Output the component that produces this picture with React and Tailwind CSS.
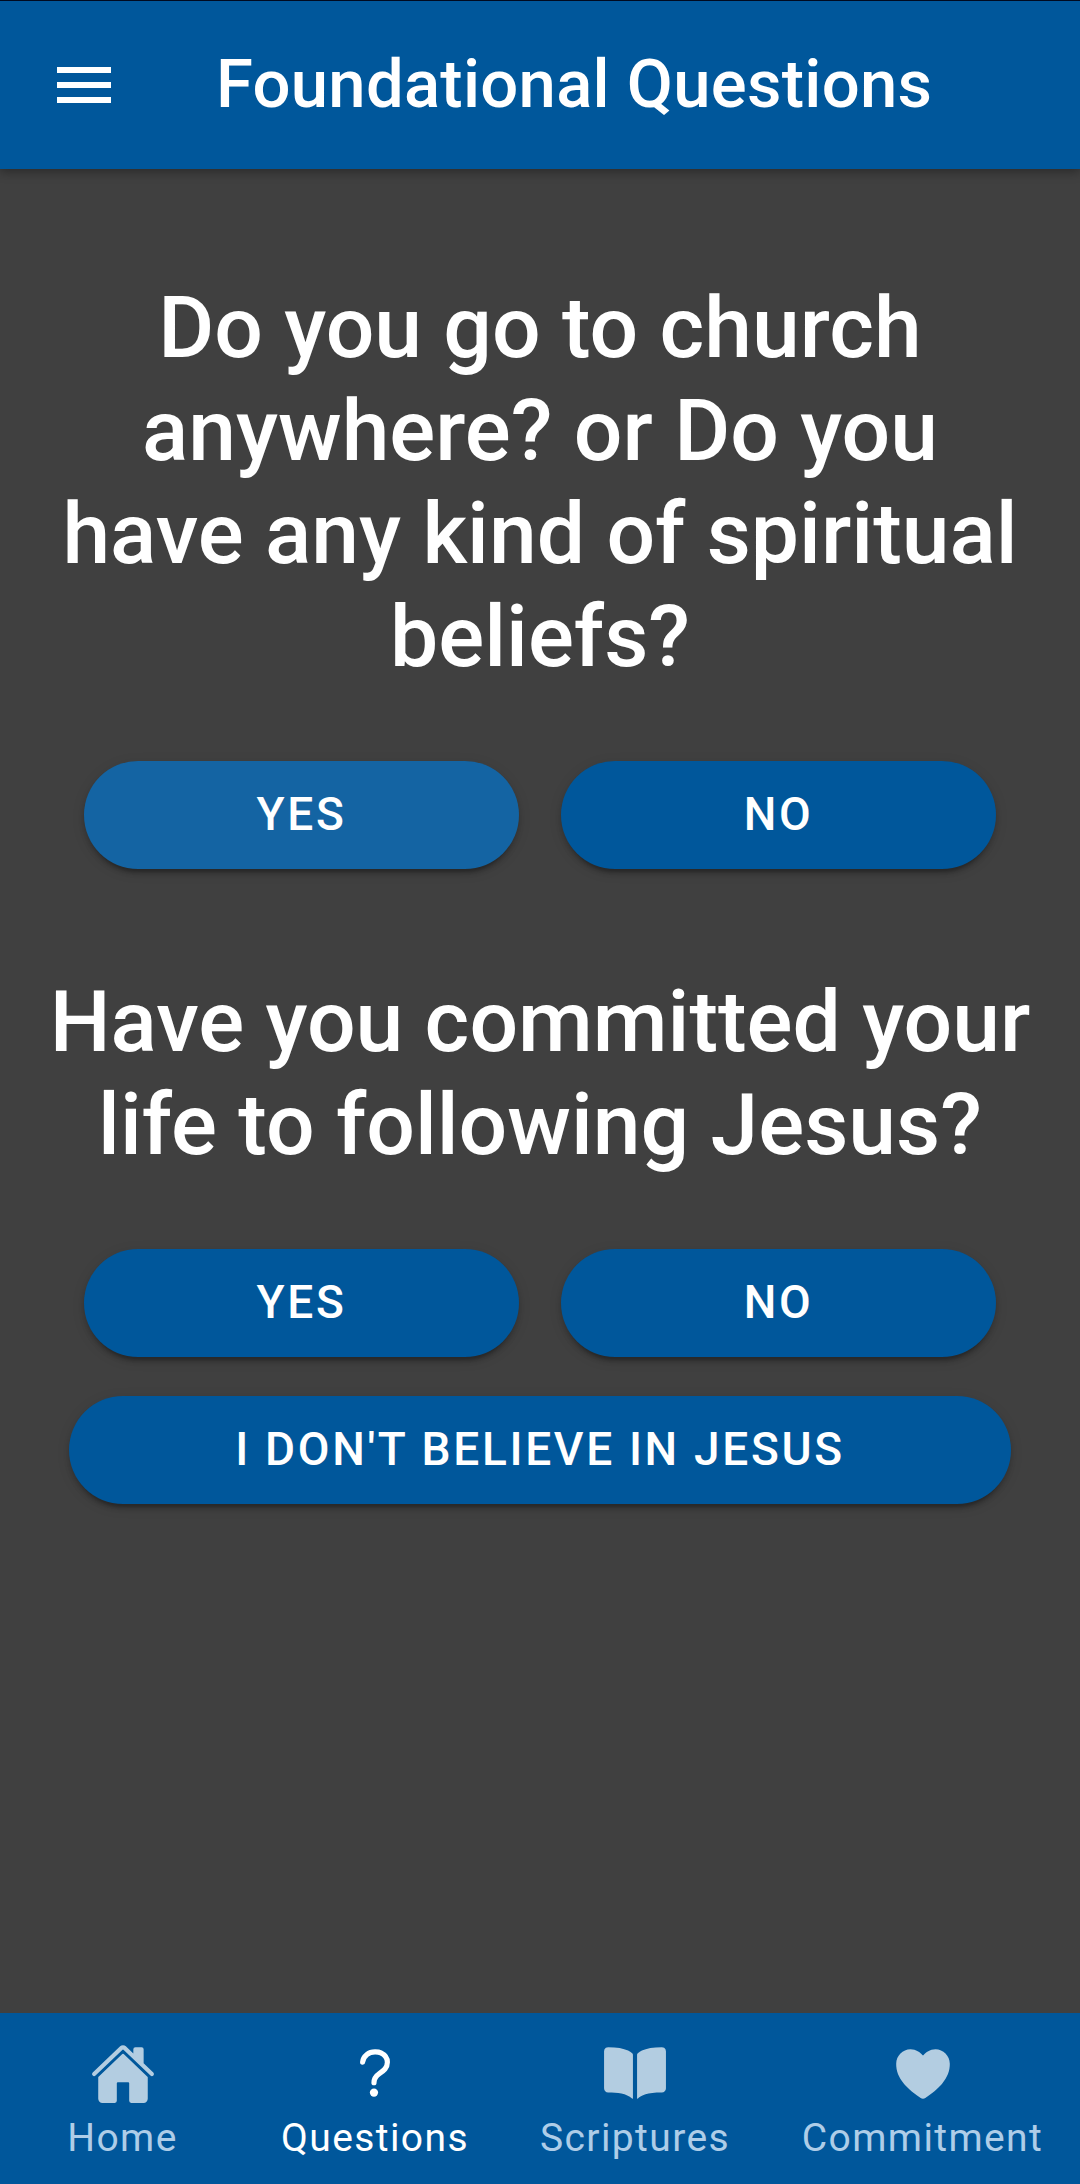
import { IoHome, IoBook, IoHeart, IoHelp } from "react-icons/io5";

const shadow = "shadow-[0_8px_3px_-5px_rgba(0,0,0,.2),0_5px_5px_rgba(0,0,0,.14),0_3px_13px_rgba(0,0,0,.12)]";

function Button({ children, className = "" }) {
  return <button className={`h-[108px] rounded-full bg-[#00579b] pb-[2px] text-[46px] font-medium tracking-[2.67px] ${shadow} ${className}`}>{children}</button>;
}

function Tab({ icon: Icon, label, active, className }) {
  return (
    <div className={`flex h-full flex-col items-center pt-[29px] ${active ? "text-white" : "text-[#aecde8]"} ${className}`}>
      <div className={`flex h-[64px] items-center justify-center ${active ? "" : "text-[#b3cde1]"}`}><Icon className="size-[66px]" /></div>
      <span className="mt-[2px] text-[39px] leading-[60px] tracking-[1.4px] whitespace-nowrap">{label}</span>
    </div>
  );
}

export default function App() {
  return (
    <div className="flex h-[2184px] w-[1080px] flex-col overflow-hidden bg-[#404040] font-['Roboto',sans-serif] text-white">
      <header className="flex h-[169px] shrink-0 items-center border-t border-[#000a20] bg-[#00579b] shadow-[0_3px_10px_rgba(0,0,0,.35)]">
        <svg className="ml-[57px] h-[36px] w-[54px]" viewBox="0 0 54 36" fill="currentColor"><path d="M0 0h54v6H0zM0 15h54v6H0zM0 30h54v6H0z" /></svg>
        <h1 className="ml-[105px] pb-[2px] text-[67px] font-medium tracking-[0.28px] whitespace-nowrap">Foundational Questions</h1>
      </header>
      <main className="flex grow flex-col items-center text-center">
        <h2 className="mt-[107px] text-[85.8px] leading-[103px] font-medium whitespace-nowrap">Do you go to church<br />anywhere? or Do you<br />have any kind of spiritual<br />beliefs?</h2>
        <div className="mt-[73px] flex gap-[42px]"><Button className="w-[435px] bg-[#1464a3]">YES</Button><Button className="w-[435px]">NO</Button></div>
        <h2 className="mt-[101px] text-[85.8px] leading-[103px] font-medium whitespace-nowrap">Have you committed your<br />life to following Jesus?</h2>
        <div className="mt-[73px] flex gap-[42px]"><Button className="w-[435px]">YES</Button><Button className="w-[435px]">NO</Button></div>
        <Button className="mt-[39px] w-[942px]">I DON'T BELIEVE IN JESUS</Button>
      </main>
      <nav className="flex h-[171px] shrink-0 bg-[#00579b]">
        <Tab icon={IoHome} label="Home" className="w-[245px]" />
        <Tab icon={IoHelp} label="Questions" active className="w-[260px]" />
        <Tab icon={IoBook} label="Scriptures" className="w-[260px]" />
        <Tab icon={IoHeart} label="Commitment" className="w-[315px]" />
      </nav>
    </div>
  );
}
